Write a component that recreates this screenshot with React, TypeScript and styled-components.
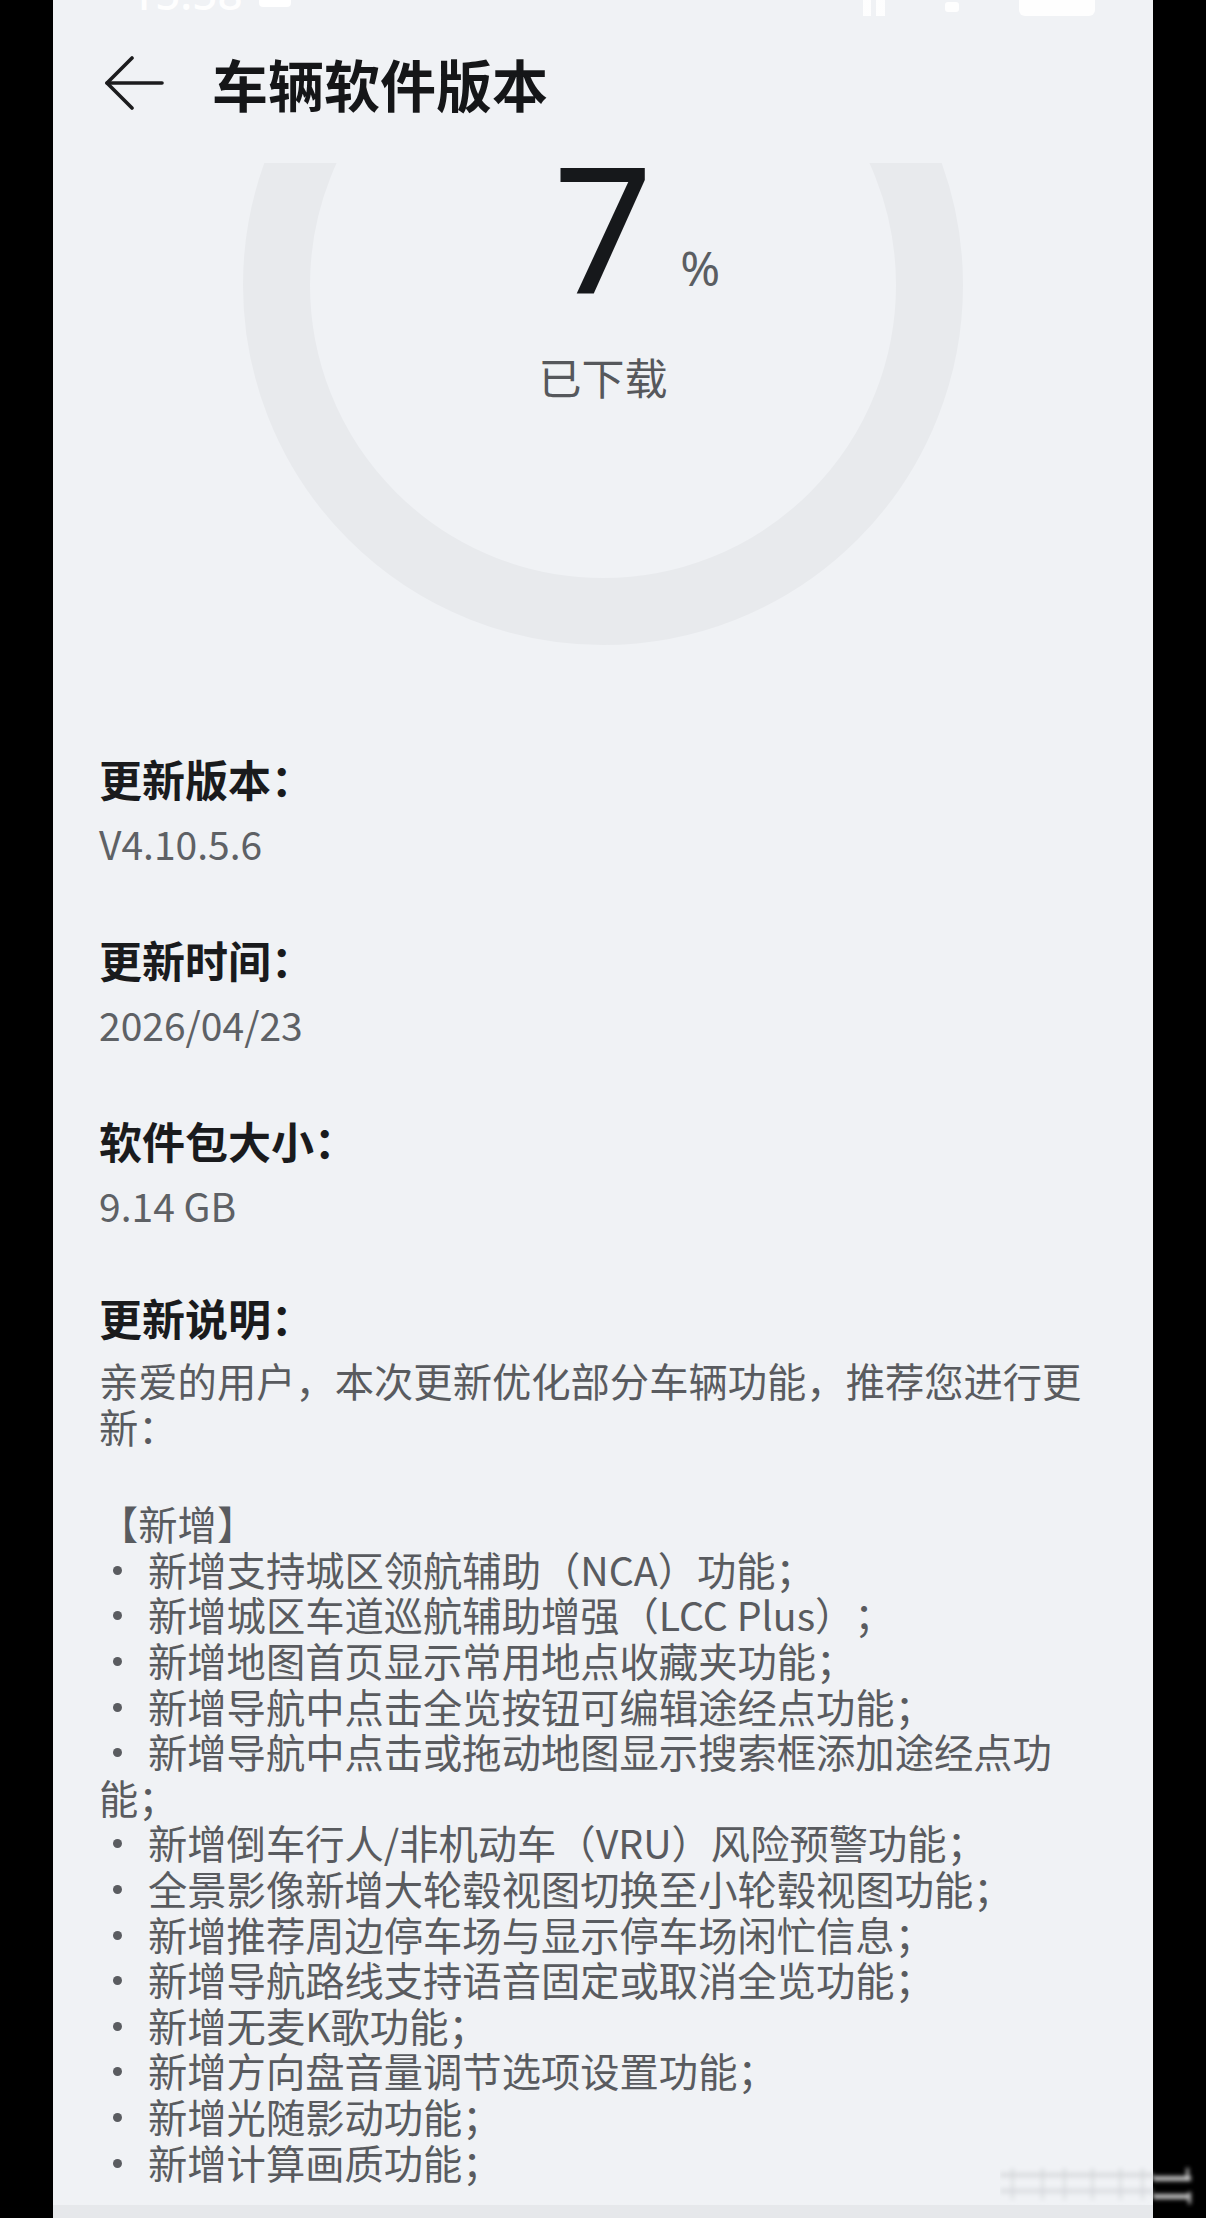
import React from 'react';
import styled, { createGlobalStyle } from 'styled-components';

const GlobalStyle = createGlobalStyle`
	html, body {
		margin: 0;
		padding: 0;
		background: #000;
	}
	body {
		font-family: "Noto Sans CJK SC", "Noto Sans", sans-serif;
		text-spacing-trim: space-all;
	}
`;

const notes = [
	'新增支持城区领航辅助（NCA）功能；',
	'新增城区车道巡航辅助增强（LCC Plus）；',
	'新增地图首页显示常用地点收藏夹功能；',
	'新增导航中点击全览按钮可编辑途经点功能；',
	'新增导航中点击或拖动地图显示搜索框添加途经点功能；',
	'新增倒车行人/非机动车（VRU）风险预警功能；',
	'全景影像新增大轮毂视图切换至小轮毂视图功能；',
	'新增推荐周边停车场与显示停车场闲忙信息；',
	'新增导航路线支持语音固定或取消全览功能；',
	'新增无麦K歌功能；',
	'新增方向盘音量调节选项设置功能；',
	'新增光随影动功能；',
	'新增计算画质功能；',
];

const fields = [
	{ label: '更新版本：', value: 'V4.10.5.6' },
	{ label: '更新时间：', value: '2026/04/23' },
	{ label: '软件包大小：', value: '9.14 GB' },
];

export default function App() {
	return (
		<>
			<GlobalStyle />
			<Page>
				<Screen>
					<Header>
						<StatusBar>
							<Clock>15:58<SimIcon /></Clock>
							<StatusIcons>
								<Bars />
								<Dot2 />
								<Battery />
							</StatusIcons>
						</StatusBar>
						<TitleBar>
							<BackArrow />
							<Title>车辆软件版本</Title>
						</TitleBar>
					</Header>

					<Hero>
						<Ring viewBox='0 0 1100 583'>
							<circle cx='550' cy='122' r='326.5' fill='none' stroke='#e8eaed' strokeWidth='67' />
						</Ring>
						<Readout>
							<NumberRow>
								<Big>7</Big>
								<Unit>%</Unit>
							</NumberRow>
							<Caption>已下载</Caption>
						</Readout>
					</Hero>

					<Details>
						{fields.map(f => (
							<Field key={f.label}>
								<Label>{f.label}</Label>
								<Value>{f.value}</Value>
							</Field>
						))}
						<Field $last>
							<Label>更新说明：</Label>
							<Body>
								<p>亲爱的用户，本次更新优化部分车辆功能，推荐您进行更新：</p>
								<BlankLine />
								<p>【新增】</p>
								{notes.map(n => (
									<p key={n}>
										<Bullet />
										{n}
									</p>
								))}
							</Body>
						</Field>
					</Details>

					<NavStrip />
				</Screen>
				<Watermark>
					<svg width='200' height='44' viewBox='0 0 200 44'>
						<defs>
							<filter id='wm-blur'>
								<feGaussianBlur stdDeviation='2.2' />
							</filter>
						</defs>
						<g filter='url(#wm-blur)'>
							<rect x='0' y='8' width='153' height='6' fill='#c9cbcf' opacity='0.45' />
							<rect x='0' y='24' width='153' height='6' fill='#c9cbcf' opacity='0.4' />
							{[10, 40, 62, 90, 118, 140].map(x => (
								<rect key={x} x={x} y='4' width='5' height='32' fill='#cfd1d5' opacity='0.35' />
							))}
							<rect x='153' y='12' width='38' height='5' fill='#e4e4e4' opacity='0.85' />
							<rect x='153' y='30' width='36' height='5' fill='#e4e4e4' opacity='0.85' />
							<rect x='186' y='4' width='3' height='12' fill='#e4e4e4' opacity='0.8' />
							<rect x='188' y='28' width='3' height='12' fill='#e4e4e4' opacity='0.8' />
						</g>
					</svg>
				</Watermark>
			</Page>
		</>
	);
}

function BackArrow() {
	return (
		<svg width='60' height='54' viewBox='0 0 60 54' fill='none' stroke='#1c1c1e' strokeWidth='3.6' strokeLinecap='round' strokeLinejoin='round'>
			<path d='M3 27 H58' />
			<path d='M28 2 L3 27 L28 52' />
		</svg>
	);
}

const Page = styled.div`
	position: relative;
	width: 1206px;
	height: 2218px;
	background: #000;
	display: flex;
	justify-content: center;
	overflow: hidden;
`;

const Screen = styled.div`
	width: 1100px;
	height: 100%;
	background: #f0f2f5;
	display: flex;
	flex-direction: column;
	overflow: hidden;
`;

const Header = styled.header`
	height: 163px;
	flex-shrink: 0;
	display: flex;
	flex-direction: column;
	background: #f0f2f5;
`;

const StatusBar = styled.div`
	height: 20px;
	overflow: hidden;
	display: flex;
	align-items: flex-end;
	justify-content: space-between;
	padding: 0 58px 0 77px;
	color: rgba(255, 255, 255, 0.95);
`;

const Clock = styled.div`
	display: flex;
	align-items: flex-end;
	gap: 16px;
	font-family: "Noto Sans", sans-serif;
	font-size: 44px;
	line-height: 44px;
	font-weight: 500;
	margin-bottom: 5px;
`;

const SimIcon = styled.span`
	width: 32px;
	height: 30px;
	margin-bottom: 8px;
	border-radius: 4px;
	background: rgba(255, 255, 255, 0.95);
`;

const StatusIcons = styled.div`
	display: flex;
	align-items: flex-end;
	gap: 60px;
	padding-bottom: 4px;
`;

const Bars = styled.span`
	width: 22px;
	height: 16px;
	background: linear-gradient(90deg, #fff 0 8px, transparent 8px 13px, #fff 13px 22px);
	opacity: 0.9;
`;

const Dot2 = styled.span`
	width: 14px;
	height: 10px;
	margin-bottom: 4px;
	border-radius: 3px;
	background: #fff;
	opacity: 0.9;
`;

const Battery = styled.span`
	width: 76px;
	height: 16px;
	border-radius: 0 0 6px 6px;
	background: #fff;
	opacity: 0.9;
`;

const TitleBar = styled.div`
	height: 126px;
	display: flex;
	align-items: center;
	gap: 48px;
	padding-left: 51px;
`;

const Title = styled.h1`
	margin: 0;
	font-size: 56px;
	line-height: 64px;
	font-weight: 700;
	color: #151618;
`;

const Hero = styled.section`
	height: 583px;
	flex-shrink: 0;
	display: grid;

	& > * {
		grid-area: 1 / 1;
	}
`;

const Ring = styled.svg`
	display: block;
	width: 1100px;
	height: 583px;
`;

const Readout = styled.div`
	align-self: start;
	display: flex;
	flex-direction: column;
	align-items: center;
`;

const NumberRow = styled.div`
	width: 100%;
	display: grid;
	grid-template-columns: 1fr auto 1fr;
`;

const Big = styled.span`
	grid-column: 2;
	font-family: "Noto Sans", sans-serif;
	font-size: 176px;
	line-height: 124px;
	font-weight: 400;
	color: #16181b;
`;

const Unit = styled.span`
	grid-column: 3;
	justify-self: start;
	padding: 81px 0 0 27px;
	font-family: "Noto Sans", sans-serif;
	font-size: 48px;
	line-height: 48px;
	color: #5b5e62;
`;

const Caption = styled.div`
	margin-top: 59px;
	font-size: 43px;
	line-height: 50px;
	color: #56585c;
`;

const Details = styled.div`
	flex: 1;
	min-height: 0;
	overflow: hidden;
	display: flex;
	flex-direction: column;
	gap: 51px;
	padding: 0 67px 0 46px;
`;

const Field = styled.div<{ $last?: boolean }>`
	margin-top: ${props => (props.$last ? '-4px' : '0')};
`;

const Label = styled.div`
	font-size: 43px;
	line-height: 64px;
	font-weight: 700;
	color: #1a1b1d;
`;

const Value = styled.div`
	font-size: 39px;
	line-height: 66px;
	color: #5e6165;
`;

const Body = styled.div`
	margin-top: 8px;
	font-size: 39.3px;
	line-height: 45.6px;
	color: #595b5f;

	p {
		margin: 0;
	}
`;

const BlankLine = styled.div`
	height: 52px;
`;

const Bullet = styled.span`
	display: inline-block;
	width: 49px;
	vertical-align: 11px;

	&::before {
		content: '';
		display: block;
		width: 9px;
		height: 9px;
		margin-left: 14px;
		border-radius: 50%;
		background: #5a5c60;
	}
`;

const NavStrip = styled.div`
	height: 13px;
	flex-shrink: 0;
	background: #e6e8eb;
`;

const Watermark = styled.div`
	position: absolute;
	left: 1000px;
	top: 2164px;
	pointer-events: none;
	line-height: 0;
`;
